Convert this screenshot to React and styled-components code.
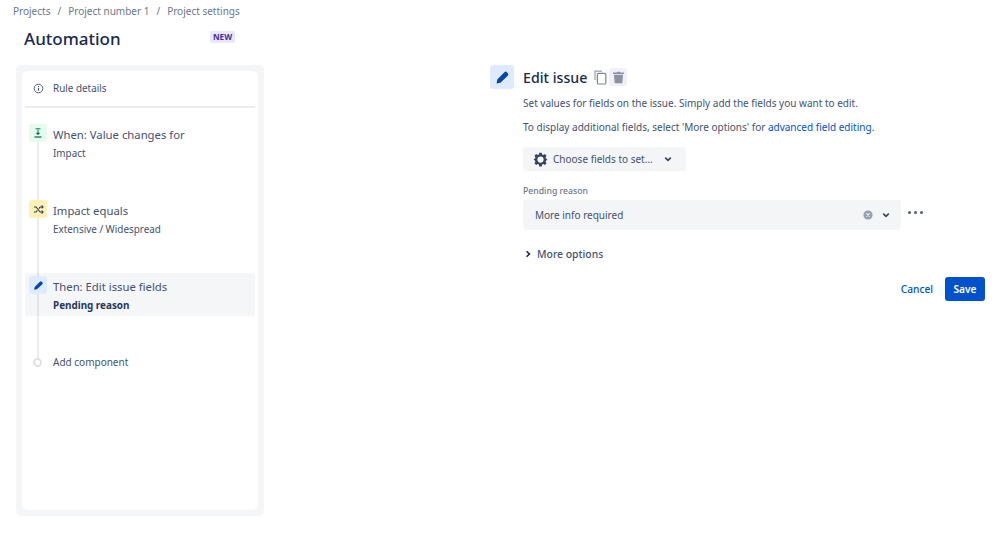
import React from "react";
import styled, { createGlobalStyle } from "styled-components";

const Global = createGlobalStyle`
  html, body { margin: 0; padding: 0; background: #fff; }
  body { font-family: "Noto Sans", "Open Sans", sans-serif; color: #42526e; }
  * { box-sizing: border-box; }
`;

const Page = styled.div`
  width: 999px;
  height: 533px;
  overflow: hidden;
  display: flex;
  flex-direction: column;
`;
const Crumbs = styled.nav`
  display: flex;
  align-items: center;
  height: 14px;
  margin: 4px 0 0 13px;
  font-size: 10px;
  color: #6b778c;
`;
const Slash = styled.span`
  margin: 0 7px;
`;
const Head = styled.header`
  width: 211px;
  height: 47px;
  margin-left: 24px;
  display: flex;
  align-items: flex-start;
  justify-content: space-between;
  padding-top: 8px;
`;
const Title = styled.h1`
  margin: 0;
  font-size: 17px;
  line-height: 26px;
  font-weight: 500;
  color: #172b4d;
`;
const Badge = styled.span`
  margin-top: 5px;
  width: 25px;
  height: 12px;
  border-radius: 2px;
  background: #eae6ff;
  color: #403294;
  font-size: 8.2px;
  font-weight: 700;
  line-height: 12px;
  text-align: center;
`;
const Main = styled.main`
  display: flex;
  align-items: flex-start;
  margin-left: 16px;
`;
const Sidebar = styled.aside`
  width: 248px;
  height: 451px;
  padding: 6px;
  border-radius: 5px;
  background: #f4f5f7;
`;
const SidebarInner = styled.div`
  height: 439px;
  padding: 0 3px;
  border-radius: 6px;
  background: #fff;
`;
const Details = styled.div`
  height: 37px;
  display: flex;
  align-items: center;
  gap: 9px;
  padding: 0 0 1px 8px;
  border-bottom: 2px solid #ebecf0;
  font-size: 9.9px;
  color: #42526e;
`;
const Timeline = styled.ol`
  position: relative;
  list-style: none;
  margin: 0;
  padding: 13px 0 0;
  &::before {
    content: "";
    position: absolute;
    left: 12px;
    top: 23px;
    height: 230px;
    width: 2px;
    background: #ebecf0;
  }
`;
const Step = styled.li`
  position: relative;
  height: 43px;
  margin-bottom: 33px;
  padding: 3px 4px;
  display: flex;
  gap: 6px;
  border-radius: 3px;
  background: ${(p) => (p.$active ? "rgba(9, 30, 66, 0.04)" : "transparent")};
`;
const StepIcon = styled.span`
  flex: none;
  width: 18px;
  height: 18px;
  border-radius: 3px;
  display: flex;
  align-items: center;
  justify-content: center;
  background: ${(p) => p.$bg};
  color: ${(p) => p.$fg};
`;
const StepTitle = styled.div`
  margin-top: 2px;
  font-size: 11.3px;
  line-height: 17px;
  color: #42526e;
`;
const StepSub = styled.div`
  margin-top: 2px;
  font-size: 9.9px;
  line-height: 16px;
  font-weight: ${(p) => (p.$strong ? 700 : 400)};
  color: ${(p) => (p.$strong ? "#253858" : "#42526e")};
`;
const AddStep = styled.li`
  position: relative;
  display: flex;
  align-items: center;
  gap: 10px;
  height: 23px;
  padding: 3px 0 0 8px;
  font-size: 10px;
  color: #42526e;
`;
const Dot = styled.span`
  width: 9px;
  height: 9px;
  border-radius: 50%;
  background: #fff;
  border: 2px solid #dfe1e6;
  margin-right: 1px;
`;
const Editor = styled.section`
  width: 496px;
  margin: 0 0 0 226px;
`;
const EditorHead = styled.div`
  display: flex;
  align-items: center;
  height: 24px;
  gap: 9px;
`;
const EditIcon = styled.span`
  width: 24px;
  height: 24px;
  border-radius: 3px;
  background: #deebff;
  color: #0747a6;
  display: flex;
  align-items: center;
  justify-content: center;
`;
const EditorTitle = styled.h2`
  margin: 2px 0 0;
  font-size: 14.2px;
  font-weight: 500;
  color: #172b4d;
  line-height: 24px;
`;
const Tools = styled.div`
  display: flex;
  align-items: center;
  gap: 0;
  margin-left: -5px;
`;
const Tool = styled.span`
  width: 18px;
  height: 18px;
  border-radius: 3px;
  display: flex;
  align-items: center;
  justify-content: center;
  background: ${(p) => (p.$filled ? "#f0f1f4" : "transparent")};
`;
const Body = styled.div`
  margin: 0 1px 0 33px;
`;
const Para = styled.p`
  margin: ${(p) => p.$m};
  font-size: 10px;
  line-height: 16px;
  color: #42526e;
`;
const Link = styled.a`
  color: #0052cc;
`;
const ChooseButton = styled.button`
  display: flex;
  align-items: center;
  gap: 5px;
  width: 163px;
  height: 24px;
  margin-top: 12px;
  padding: 0 0 0 10px;
  border: 0;
  border-radius: 3px;
  background: #f4f5f7;
  font: inherit;
  font-size: 10px;
  color: #42526e;
`;
const ButtonCaret = styled.span`
  display: flex;
  margin-left: 5px;
`;
const FieldLabel = styled.div`
  margin-top: 14px;
  font-size: 8.7px;
  line-height: 12px;
  font-weight: 500;
  color: #6b778c;
`;
const FieldRow = styled.div`
  display: flex;
  align-items: flex-start;
  gap: 7px;
  margin-top: 3px;
`;
const Select = styled.div`
  width: 378px;
  height: 30px;
  display: flex;
  align-items: center;
  padding: 0 10px 0 12px;
  border-radius: 3px;
  background: #f4f5f7;
  font-size: 10px;
  color: #42526e;
`;
const SelectValue = styled.span`
  flex: 1;
`;
const SelectIcons = styled.span`
  display: flex;
  align-items: center;
  gap: 8px;
`;
const More = styled.span`
  display: flex;
  gap: 3px;
  margin-top: 11px;
  & > i {
    width: 3px;
    height: 3px;
    border-radius: 50%;
    background: #505f79;
  }
`;
const MoreOptions = styled.div`
  display: flex;
  align-items: center;
  gap: 4px;
  margin-top: 16px;
  height: 16px;
  font-size: 10.4px;
  font-weight: 500;
  color: #42526e;
`;
const Actions = styled.div`
  display: flex;
  justify-content: flex-end;
  align-items: center;
  gap: 12px;
  margin-top: 15px;
`;
const TextButton = styled.button`
  border: 0;
  padding: 0;
  background: none;
  font: inherit;
  font-size: 10.2px;
  font-weight: 500;
  color: #0052cc;
`;
const Primary = styled.button`
  width: 40px;
  height: 24px;
  padding: 0;
  border: 0;
  border-radius: 3px;
  background: #0052cc;
  color: #fff;
  font: inherit;
  font-size: 10.2px;
  font-weight: 600;
`;
const ChevronSvg = styled.svg`
  transform: rotate(${(p) => p.$rotate || 0}deg);
`;

const Pencil = ({ size = 12 }) => (
  <svg width={size} height={size} viewBox="0 0 24 24" fill="currentColor">
    <path d="M2.5 21.5l1.2-6.2L15 3.6a2.8 2.8 0 0 1 4 0l1.4 1.4a2.8 2.8 0 0 1 0 4L8.7 20.3z" />
  </svg>
);

const Chevron = ({ rotate = 0, color = "#344563" }) => (
  <ChevronSvg $rotate={rotate} width="10" height="10" viewBox="0 0 10 10" fill="none" stroke={color} strokeWidth="1.6">
    <path d="M2.2 3.6 5 6.4l2.8-2.8" />
  </ChevronSvg>
);

export default function App() {
  return (
    <Page>
      <Global />
      <Crumbs>
        <span>Projects</span><Slash>/</Slash>
        <span>Project number 1</span><Slash>/</Slash>
        <span>Project settings</span>
      </Crumbs>
      <Head>
        <Title>Automation</Title>
        <Badge>NEW</Badge>
      </Head>
      <Main>
        <Sidebar>
          <SidebarInner>
            <Details>
              <svg width="11" height="11" viewBox="0 0 12 12" fill="none" stroke="#42526e">
                <circle cx="6" cy="6" r="4.7" />
                <path d="M6 5.4v3" strokeWidth="1.2" />
                <path d="M6 3.3v1.1" strokeWidth="1.2" />
              </svg>
              <span>Rule details</span>
            </Details>
            <Timeline>
              <Step>
                <StepIcon $bg="#e3fcef" $fg="#006644">
                  <svg width="10" height="10" viewBox="0 0 10 10" fill="none" stroke="currentColor">
                    <path d="M2.5 .8h5" strokeWidth="0.9" />
                    <path d="M1.5 9h7" strokeWidth="1.2" />
                    <path d="M5 1.5v4" strokeWidth="0.9" />
                    <path d="M3.4 5h3.2L5 7z" fill="currentColor" strokeWidth="0.5" />
                  </svg>
                </StepIcon>
                <div>
                  <StepTitle>When: Value changes for</StepTitle>
                  <StepSub>Impact</StepSub>
                </div>
              </Step>
              <Step>
                <StepIcon $bg="#fff0b3" $fg="#253858">
                  <svg width="11" height="11" viewBox="0 0 12 12" fill="none" stroke="currentColor" strokeWidth="1.1">
                    <path d="M1 3.2h2.4l4.4 5.6H10.5M1 8.8h2.4l1.4-1.8M6.4 5l1.4-1.8h2.7" />
                    <path d="M9.4 1.6 11 3.2 9.4 4.8M9.4 7.2 11 8.8 9.4 10.4" />
                  </svg>
                </StepIcon>
                <div>
                  <StepTitle>Impact equals</StepTitle>
                  <StepSub>Extensive / Widespread</StepSub>
                </div>
              </Step>
              <Step $active>
                <StepIcon $bg="#deebff" $fg="#0747a6">
                  <Pencil size={11} />
                </StepIcon>
                <div>
                  <StepTitle>Then: Edit issue fields</StepTitle>
                  <StepSub $strong>Pending reason</StepSub>
                </div>
              </Step>
              <AddStep>
                <Dot />
                <span>Add component</span>
              </AddStep>
            </Timeline>
          </SidebarInner>
        </Sidebar>
        <Editor>
          <EditorHead>
            <EditIcon><Pencil size={15} /></EditIcon>
            <EditorTitle>Edit issue</EditorTitle>
            <Tools>
              <Tool>
                <svg width="13" height="15" viewBox="0 0 13 15" fill="none" stroke="#97a0af" strokeWidth="1.2">
                  <path d="M1 10V1.2h7" />
                  <rect x="3.4" y="3.4" width="8.4" height="10.6" rx="1" stroke="#7a869a" />
                </svg>
              </Tool>
              <Tool $filled>
                <svg width="13" height="13" viewBox="0 0 13 13" fill="#8993a4">
                  <path d="M1 1.6h3.6l.6-.8h2.6l.6.8H12v1.4H1z" />
                  <path d="M2 3.8h9l-.7 8.4H2.7z" />
                </svg>
              </Tool>
            </Tools>
          </EditorHead>
          <Body>
            <Para $m="6px 0 0">Set values for fields on the issue. Simply add the fields you want to edit.</Para>
            <Para $m="8px 0 0">To display additional fields, select 'More options' for <Link>advanced field editing</Link>.</Para>
            <ChooseButton>
              <svg width="15" height="15" viewBox="0 0 24 24" fill="#344563">
                <path fillRule="evenodd" d="M10 1h4l.6 2.9 1.8.8 2.5-1.6 2.8 2.8-1.6 2.5.8 1.8L23 12l-2.1 1.8-.8 1.8 1.6 2.5-2.8 2.8-2.5-1.6-1.8.8L14 23h-4l-.6-2.9-1.8-.8-2.5 1.6-2.8-2.8 1.6-2.5-.8-1.8L1 12l2.1-1.8.8-1.8L2.3 5.9l2.8-2.8 2.5 1.6 1.8-.8zM12 7a5 5 0 1 0 0 10 5 5 0 0 0 0-10z" />
              </svg>
              <span>Choose fields to set...</span>
              <ButtonCaret><Chevron /></ButtonCaret>
            </ChooseButton>
            <FieldLabel>Pending reason</FieldLabel>
            <FieldRow>
              <Select>
                <SelectValue>More info required</SelectValue>
                <SelectIcons>
                  <svg width="10" height="10" viewBox="0 0 10 10">
                    <circle cx="5" cy="5" r="4.6" fill="#97a0af" />
                    <path d="M3.4 3.4l3.2 3.2M6.6 3.4 3.4 6.6" stroke="#f4f5f7" strokeWidth="1.1" />
                  </svg>
                  <Chevron />
                </SelectIcons>
              </Select>
              <More><i /><i /><i /></More>
            </FieldRow>
            <MoreOptions>
              <Chevron rotate={-90} color="#172b4d" />
              <span>More options</span>
            </MoreOptions>
            <Actions>
              <TextButton>Cancel</TextButton>
              <Primary>Save</Primary>
            </Actions>
          </Body>
        </Editor>
      </Main>
    </Page>
  );
}
